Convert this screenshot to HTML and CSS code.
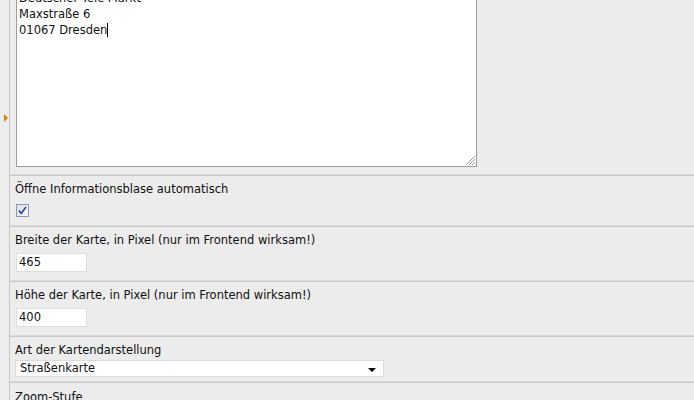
FILE: index.html
```html
<!DOCTYPE html>
<html lang="de">
<head>
<meta charset="utf-8">
<link rel="stylesheet" href="styles.css">
</head>
<body>
<div class="page">
  <div class="gutter"><span class="marker"></span></div>
  <div class="main">
    <div class="section section-area">
      <div class="textarea">
        <div class="line">Deutscher Tele Markt</div>
        <div class="line">Maxstraße 6</div>
        <div class="line">01067 Dresden<span class="caret"></span></div>
        <svg class="grip" width="12" height="12" viewBox="0 0 12 12"><path d="M11 2 L2 11 M11 5 L5 11 M11 8 L8 11" stroke="#9a9a9a" stroke-width="1" fill="none"/></svg>
      </div>
    </div>
    <div class="section">
      <div class="label">Öffne Informationsblase automatisch</div>
      <svg class="checkbox" width="13" height="13" viewBox="0 0 13 13">
        <defs><linearGradient id="cb" x1="0" y1="0" x2="1" y2="1"><stop offset="0" stop-color="#dcdcdc"/><stop offset="1" stop-color="#fbfbfb"/></linearGradient></defs>
        <rect x="0.5" y="0.5" width="12" height="12" fill="url(#cb)" stroke="#8e9aae"/>
        <path d="M3 6.5 L5.2 9.5 L10 3" stroke="#2a3fae" stroke-width="1.6" fill="none"/>
      </svg>
    </div>
    <div class="section">
      <div class="label">Breite der Karte, in Pixel (nur im Frontend wirksam!)</div>
      <div class="input">465</div>
    </div>
    <div class="section">
      <div class="label">Höhe der Karte, in Pixel (nur im Frontend wirksam!)</div>
      <div class="input">400</div>
    </div>
    <div class="section section-select">
      <div class="label">Art der Kartendarstellung</div>
      <div class="select"><span>Straßenkarte</span><span class="arrow"></span></div>
    </div>
    <div class="section section-last">
      <div class="label">Zoom-Stufe</div>
    </div>
  </div>
</div>
</body>
</html>
```

FILE: styles.css
```css
html, body {
  margin: 0;
  padding: 0;
  background: #ececec;
  overflow: hidden;
  height: 400px;
}
body {
  font-family: "DejaVu Sans", Verdana, sans-serif;
  font-size: 11.5px;
  color: #111;
}
.page {
  display: flex;
  height: 400px;
}
.gutter {
  width: 10px;
  flex: none;
  border-right: 1px solid #c6c6c6;
  background: #ededed;
  display: flex;
  flex-direction: column;
  padding-top: 114px;
  box-sizing: border-box;
}
.marker {
  margin-left: 4px;
  width: 0;
  height: 0;
  border-top: 4px solid transparent;
  border-bottom: 4px solid transparent;
  border-left: 4px solid #d3860f;
}
.main {
  flex: 1;
  margin-top: -20px;
  display: flex;
  flex-direction: column;
}
.section {
  border-top: 1px solid #dadada;
  box-shadow: inset 0 1px 0 #c9c9c9;
  padding: 7px 6px 8px 6px;
  display: flex;
  flex-direction: column;
  align-items: flex-start;
}
.section-area {
  border-top: 0;
  box-shadow: none;
  padding: 6px 6px 7px 6px;
}
.label {
  line-height: 14px;
  height: 14px;
  margin-left: -1px;
  white-space: nowrap;
}
.textarea {
  position: relative;
  width: 461px;
  height: 181px;
  box-sizing: border-box;
  background: #fff;
  border: 1px solid #9c9c9c;
  padding: 3px 2px 2px;
  line-height: 16px;
}
.caret {
  display: inline-block;
  width: 1px;
  height: 14px;
  background: #000;
  vertical-align: -3px;
}
.grip {
  position: absolute;
  right: 0;
  bottom: 0;
}
.checkbox {
  margin-top: 8px;
  display: block;
}
.input {
  margin-top: 6px;
  width: 71px;
  height: 19px;
  box-sizing: border-box;
  background: #fff;
  border: 1px solid #dedede;
  padding: 0 2px;
  line-height: 17px;
}
.section-select {
  padding-bottom: 4px;
}
.section-last {
  padding-top: 8px;
}
.select {
  margin-top: 3px;
  margin-left: -1px;
  width: 369px;
  height: 17px;
  box-sizing: border-box;
  background: #fff;
  border: 1px solid #dcdcdc;
  padding: 0 7px 0 4px;
  line-height: 15px;
  display: flex;
  align-items: center;
  justify-content: space-between;
}
.arrow {
  width: 0;
  height: 0;
  border-left: 4px solid transparent;
  border-right: 4px solid transparent;
  border-top: 4px solid #000;
  margin-top: 2px;
}
```
